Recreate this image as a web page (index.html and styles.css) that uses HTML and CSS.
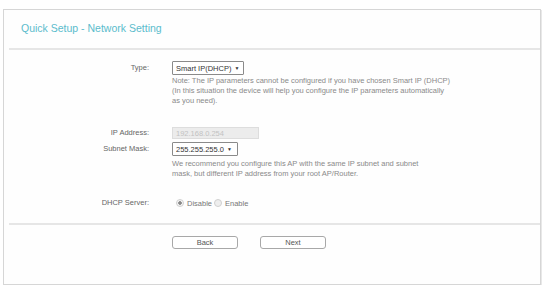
FILE: index.html
```html
<!DOCTYPE html>
<html lang="en">
<head>
  <meta charset="UTF-8">
  <title>Quick Setup - Network Setting</title>
  <link rel="stylesheet" href="styles.css">
</head>
<body>

  <div class="panel">
    <div class="panel-title">Quick Setup - Network Setting</div>

    <div class="form">
      <div class="row row-type">
        <label>Type:</label>
        <div class="field">
          <div class="select sel-type">Smart IP(DHCP) <span class="caret">&#9660;</span></div>
          <p class="hint">Note: The IP parameters cannot be configured if you have chosen Smart IP (DHCP)<br>
          (In this situation the device will help you configure the IP parameters automatically<br>
          as you need).</p>
        </div>
      </div>

      <div class="row row-ip">
        <label>IP Address:</label>
        <div class="field">
          <input class="text" value="192.168.0.254" disabled>
        </div>
      </div>

      <div class="row row-mask">
        <label>Subnet Mask:</label>
        <div class="field">
          <div class="select sel-mask">255.255.255.0 <span class="caret">&#9660;</span></div>
          <p class="hint">We recommend you configure this AP with the same IP subnet and subnet<br>
          mask, but different IP address from your root AP/Router.</p>
        </div>
      </div>

      <div class="row row-dhcp">
        <label>DHCP Server:</label>
        <div class="field radios">
          <span class="radio checked"></span><span class="opt">Disable</span>
          <span class="radio"></span><span class="opt">Enable</span>
        </div>
      </div>
    </div>

    <div class="actions">
      <button>Back</button>
      <button>Next</button>
    </div>
  </div>

</body>
</html>
```

FILE: styles.css
```css
* { box-sizing: border-box; }
body {
  margin: 0;
  background: #fff;
  font-family: 'Liberation Sans', Arial, sans-serif;
  color: #555;
}
.panel {
  margin: 9px 12px 0 3px;
  height: 276px;
  border: 1px solid #d6d6d6;
  box-shadow: 1px 1px 0 #e8e8e8;
  background: #fefefe;
}
.panel-title {
  height: 40px;
  margin-left: 5px;
  padding: 12px 0 0 12px;
  border-bottom: 2px solid #e6e6e6;
  color: #5bbccc;
  font-size: 10.5px;
}
.form {
  padding-top: 11px;
}
.row {
  display: grid;
  grid-template-columns: 145px 1fr;
  column-gap: 23px;
  font-size: 7.5px;
}
.row label {
  text-align: right;
  line-height: 14px;
  color: #666;
}
.select {
  display: inline-block;
  white-space: nowrap;
  height: 14px;
  line-height: 12px;
  padding: 0 4px 0 3px;
  border: 1px solid #8a8a8a;
  border-radius: 1px;
  color: #333;
  background: #fff;
}
.sel-type { min-width: 71px; }
.sel-mask { min-width: 66px; }
.caret {
  font-size: 5px;
  vertical-align: 1px;
  margin-left: 1px;
}
.hint {
  margin: 1px 0 0;
  line-height: 10px;
  color: #8a8a8a;
}
.row-ip { margin-top: 21px; }
.row-ip label { line-height: 12px; }
.text {
  width: 87px;
  height: 12px;
  padding: 0 3px;
  font: inherit;
  border: 1px solid #ddd;
  background: #ececec;
  color: #c2c2c2;
}
.row-mask { margin-top: 3px; }
.row-mask .hint { margin-top: 3px; }
.row-dhcp {
  margin-top: 17px;
  padding-bottom: 13px;
  margin-left: 5px;
  grid-template-columns: 140px 1fr;
  border-bottom: 2px solid #e6e6e6;
}
.radios {
  display: flex;
  align-items: center;
  height: 14px;
  padding-left: 4px;
}
.radio {
  width: 8px;
  height: 8px;
  border-radius: 50%;
  border: 1px solid #d0d0d0;
  background: #eee;
}
.radio.checked {
  background: radial-gradient(circle, #888 0 1.5px, #f4f4f4 2px);
}
.opt {
  margin: 0 2px 0 3px;
  color: #777;
}
.actions {
  display: flex;
  gap: 22px;
  padding: 11px 0 0 168px;
}
button {
  width: 66px;
  height: 13px;
  padding: 0;
  font-family: inherit;
  font-size: 7.5px;
  color: #555;
  background: #fff;
  border: 1px solid #a8a8a8;
  border-radius: 3px;
}
```
